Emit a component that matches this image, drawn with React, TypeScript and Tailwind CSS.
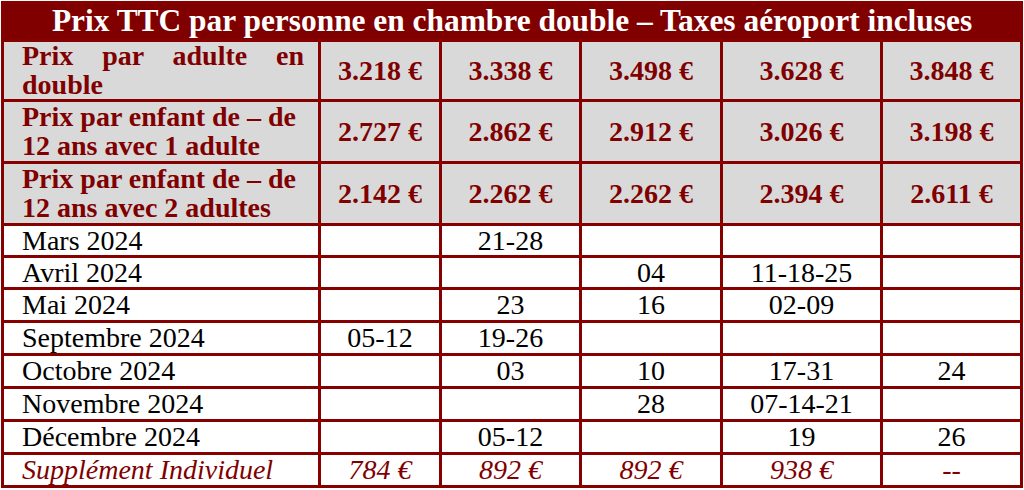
const serif = "font-['Liberation_Serif','Times_New_Roman',serif]";

const headRows = [
    { label: "Prix par adulte en double", justify: true, h: "h-[60px]", prices: ["3.218 €", "3.338 €", "3.498 €", "3.628 €", "3.848 €"] },
    { label: "Prix par enfant de – de 12 ans avec 1 adulte", justify: false, h: "h-[62px]", prices: ["2.727 €", "2.862 €", "2.912 €", "3.026 €", "3.198 €"] },
    { label: "Prix par enfant de – de 12 ans avec 2 adultes", justify: false, h: "h-[62px]", prices: ["2.142 €", "2.262 €", "2.262 €", "2.394 €", "2.611 €"] },
];

const months: [string, string[], string][] = [
    ["Mars 2024", ["", "21-28", "", "", ""], "h-[32px]"],
    ["Avril 2024", ["", "", "04", "11-18-25", ""], "h-[32px]"],
    ["Mai 2024", ["", "23", "16", "02-09", ""], "h-[33px]"],
    ["Septembre 2024", ["05-12", "19-26", "", "", ""], "h-[33px]"],
    ["Octobre 2024", ["", "03", "10", "17-31", "24"], "h-[33px]"],
    ["Novembre 2024", ["", "", "28", "07-14-21", ""], "h-[33px]"],
    ["Décembre 2024", ["", "05-12", "", "19", "26"], "h-[33px]"],
];

const supplement = ["784 €", "892 €", "892 €", "938 €", "--"];

const cell = "p-0 border-[3px] border-[#860000]";

const App = () => {
    return (
        <div className={`w-[1024px] h-[490px] bg-white pt-[1px] pl-[1px] ${serif}`}>
            <table className="w-[1021px] table-fixed border-collapse">
                <colgroup>
                    <col className="w-[317px]" />
                    <col className="w-[121px]" />
                    <col className="w-[140px]" />
                    <col className="w-[141px]" />
                    <col className="w-[160px]" />
                    <col className="w-[140px]" />
                </colgroup>
                <tbody>
                    {/* Title */}
                    <tr className="h-[38px]">
                        <td colSpan={6} className={`${cell} bg-[#800000] text-white font-bold text-[31.4px] leading-[32px] text-center pb-[2px]`}>
                            Prix TTC par personne en chambre double – Taxes aéroport incluses
                        </td>
                    </tr>

                    {/* Prices */}
                    {headRows.map((row) => (
                        <tr key={row.label} className={row.h}>
                            <td className={`${cell} bg-[#d9d9d9] text-[#800000] font-bold text-[28px] leading-[28.5px] pl-[18px] pr-[14px] ${row.justify ? "text-justify" : "text-left"}`}>
                                {row.label}
                            </td>
                            {row.prices.map((p, i) => (
                                <td key={i} className={`${cell} bg-[#d9d9d9] text-[#800000] font-bold text-[28px] leading-[30px] text-center`}>
                                    {p}
                                </td>
                            ))}
                        </tr>
                    ))}

                    {/* Dates */}
                    {months.map(([month, dates, h]) => (
                        <tr key={month} className={h}>
                            <td className={`${cell} text-black text-[28px] leading-[28px] pl-[18px]`}>{month}</td>
                            {dates.map((d, i) => (
                                <td key={i} className={`${cell} text-black text-[28px] leading-[28px] text-center`}>{d}</td>
                            ))}
                        </tr>
                    ))}

                    {/* Supplement */}
                    <tr className="h-[33px]">
                        <td className={`${cell} text-[#800000] italic text-[28px] leading-[28px] pl-[18px]`}>Supplément Individuel</td>
                        {supplement.map((s, i) => (
                            <td key={i} className={`${cell} text-[#800000] italic text-[28px] leading-[28px] text-center`}>{s}</td>
                        ))}
                    </tr>
                </tbody>
            </table>
        </div>
    );
};

export default App;
